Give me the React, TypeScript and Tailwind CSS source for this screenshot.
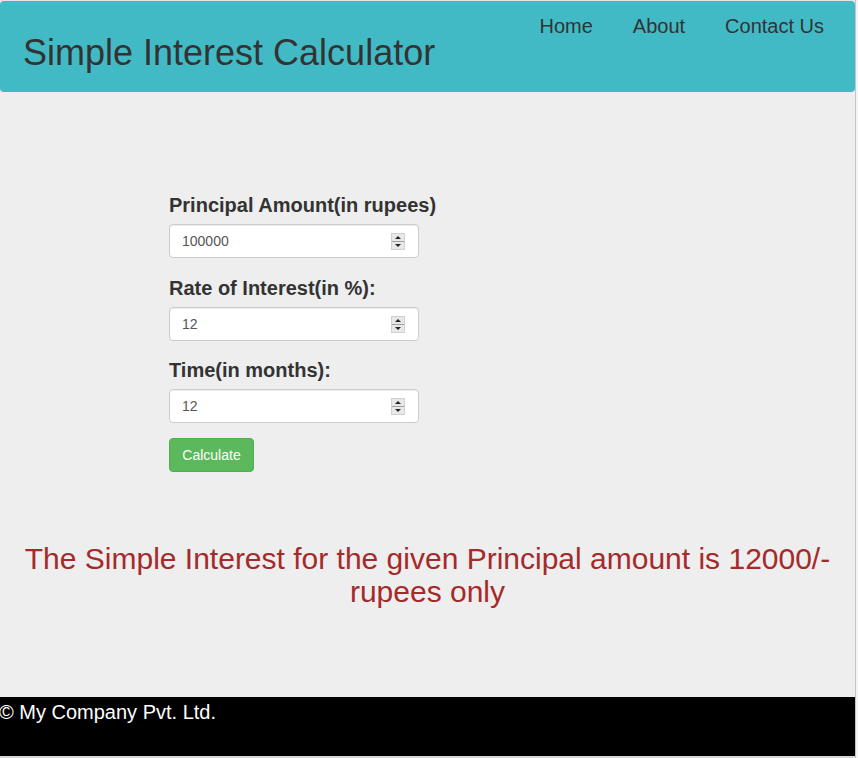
import React from "react";

function Spinner() {
  return (
    <svg width="14" height="17" viewBox="0 0 14 17" className="block">
      <rect x="0.5" y="0.5" width="13" height="16" fill="#e8e8e8" stroke="#d0d0d0" />
      <line x1="1" y1="8.5" x2="13" y2="8.5" stroke="#a0a0a0" />
      <polygon points="4,6 10,6 7,3" fill="#222" />
      <polygon points="4,11 10,11 7,14" fill="#222" />
    </svg>
  );
}

function NumberField({ value }: { value: string }) {
  return (
    <div className="flex h-[34px] w-[250px] items-center justify-between rounded border border-[#cccccc] bg-white pl-[12px] pr-[13px] text-[14px] text-[#555555] shadow-[inset_0_1px_1px_rgba(0,0,0,0.075)]">
      <span>{value}</span>
      <Spinner />
    </div>
  );
}

function Label({ children }: { children: React.ReactNode }) {
  return <div className="text-[20px] font-bold leading-6 text-[#333333]">{children}</div>;
}

export default function App() {
  return (
    <div className="flex h-[758px] w-[858px] overflow-hidden bg-[#eeeeee] font-['Liberation_Sans',Arial,sans-serif]">
      <div className="flex w-[855px] flex-col">
        <div className="h-px bg-[#e4e4e4]" />
        <header className="flex h-[91px] items-start justify-between rounded bg-[#41bac6] text-[#333333]">
          <h1 className="pl-[23px] pt-[32px] text-[36px] leading-[40px] font-normal">Simple Interest Calculator</h1>
          <nav className="flex gap-[40px] pr-[31px] pt-[13px] text-[20px] leading-6">
            <span>Home</span>
            <span>About</span>
            <span>Contact Us</span>
          </nav>
        </header>
        <main className="flex h-[605px] flex-col">
          <div className="ml-[169px] flex flex-col pt-[101px]">
            <Label>Principal Amount(in rupees)</Label>
            <div className="mt-[7px]">
              <NumberField value="100000" />
            </div>
            <div className="mt-[18px]">
              <Label>Rate of Interest(in %):</Label>
            </div>
            <div className="mt-[7px]">
              <NumberField value="12" />
            </div>
            <div className="mt-[17px]">
              <Label>Time(in months):</Label>
            </div>
            <div className="mt-[7px]">
              <NumberField value="12" />
            </div>
            <div className="mt-[15px]">
              <button className="h-[34px] w-[85px] rounded border border-[#4cae4c] bg-[#5cb85c] text-[14px] text-white">
                Calculate
              </button>
            </div>
          </div>
          <div className="mt-[70px] px-[15px] text-center text-[30px] leading-[33px] text-[#a52a2a]">
            The Simple Interest for the given Principal amount is 12000/- rupees only
          </div>
        </main>
        <footer className="h-[59px] bg-black pt-[3px] text-[20px] leading-6 text-white">
          <span className="-ml-px">© My Company Pvt. Ltd.</span>
        </footer>
        <div className="h-[2px] bg-[#d6d6d6]" />
      </div>
      <div className="w-[3px] border-l border-[#c4c4c4] bg-[#f4f4f4]" />
    </div>
  );
}
